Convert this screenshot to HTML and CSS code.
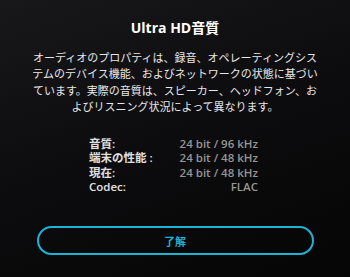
FILE: index.html
```html
<!DOCTYPE html>
<html lang="ja">
<head>
<meta charset="utf-8">
<link rel="stylesheet" href="styles.css">
</head>
<body>
<div class="dialog">
  <h1 class="title">Ultra HD音質</h1>
  <p class="desc">オーディオのプロパティは、録音、オペレーティングシステムのデバイス機能、およびネットワークの状態に基づいています。実際の音質は、スピーカー、ヘッドフォン、およびリスニング状況によって異なります。</p>
  <div class="info">
    <span class="label">音質:</span><span class="value">24 bit / 96 kHz</span>
    <span class="label">端末の性能 :</span><span class="value">24 bit / 48 kHz</span>
    <span class="label">現在:</span><span class="value">24 bit / 48 kHz</span>
    <span class="label">Codec:</span><span class="value">FLAC</span>
  </div>
  <button class="ok">了解</button>
</div>
</body>
</html>
```

FILE: styles.css
```css
html, body {
  margin: 0;
  padding: 0;
}
body {
  width: 350px;
  height: 277px;
  overflow: hidden;
  background: linear-gradient(160deg, #18181b 0%, #0d0d0f 45%, #050505 100%);
  font-family: "Open Sans", "Noto Sans CJK JP", sans-serif;
  color: #f2f2f2;
}
.dialog {
  display: flex;
  flex-direction: column;
  align-items: center;
  padding-top: 18px;
}
.title {
  margin: 0;
  font-size: 14px;
  line-height: 20px;
  font-weight: 700;
  color: #ffffff;
}
.desc {
  margin: 11px 0 0;
  width: 290px;
  font-size: 11px;
  line-height: 16.3px;
  text-align: center;
  color: #e8e8e8;
  font-family: "Noto Sans CJK JP", sans-serif;
}
.info {
  margin: 23px 3px 0 0;
  width: 169px;
  display: grid;
  grid-template-columns: auto auto;
  justify-content: space-between;
  font-size: 11.5px;
  line-height: 14.2px;
}
.label {
  color: #e0e0e0;
  font-weight: 600;
}
.value {
  color: #959595;
  text-align: right;
  font-weight: 600;
}
.ok {
  margin-top: 32px;
  width: 277px;
  height: 29px;
  box-sizing: border-box;
  border: 2px solid #1bb3d6;
  border-radius: 15px;
  background: transparent;
  color: #1bb3d6;
  font-family: "Noto Sans CJK JP", sans-serif;
  font-size: 11px;
  font-weight: 700;
  padding: 0;
}
```
